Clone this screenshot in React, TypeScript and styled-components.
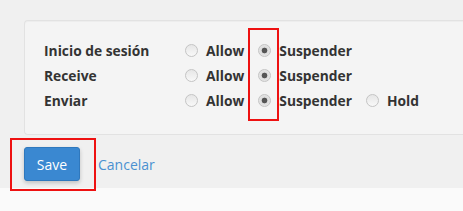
import React from 'react';
import styled, { createGlobalStyle } from 'styled-components';

const GlobalStyle = createGlobalStyle`
  body {
    margin: 0;
    background: #fafafa;
    font-family: 'Open Sans', 'Liberation Sans', sans-serif;
  }
`;

const Page = styled.div`
  position: relative;
  width: 463px;
  height: 211px;
  overflow: hidden;
  background: #fafafa;
`;

const Gray = styled.div`
  background: #f0f0f0;
  padding: 20px 0 8px 24px;
  height: 160px;
`;

const Panel = styled.div`
  background: #f4f4f4;
  border: 1px solid #e2e2e2;
  border-right: none;
  border-radius: 4px 0 0 4px;
  padding: 17px 0 21px 19px;
  box-shadow: inset 0 1px 1px rgba(0, 0, 0, 0.03);
`;

const Row = styled.div`
  display: grid;
  grid-template-columns: 141px auto;
  align-items: center;
  height: 25px;
`;

const Label = styled.div`
  font-size: 13.8px;
  font-weight: 700;
  color: #333;
`;

const Options = styled.div`
  display: flex;
  align-items: center;
  gap: 14px;
`;

const Option = styled.label`
  display: flex;
  align-items: center;
  gap: 8px;
  font-size: 13.8px;
  font-weight: 700;
  color: #333;
`;

const Radio = styled.span<{ $checked?: boolean }>`
  box-sizing: border-box;
  width: 13px;
  height: 13px;
  border-radius: 50%;
  border: 1px solid #c4c4c4;
  background: ${(p) =>
    p.$checked
      ? 'radial-gradient(circle, #555 0 2.5px, #dcdcdc 3.2px, #eee 100%)'
      : 'linear-gradient(#e6e6e6, #f8f8f8)'};
`;

const Actions = styled.div`
  display: flex;
  align-items: center;
  gap: 18px;
  margin-top: 12px;
`;

const SaveButton = styled.button`
  width: 56px;
  height: 34px;
  border: 1px solid #2f78bd;
  border-radius: 3px;
  background: #3a88d1;
  color: #fff;
  font-family: 'Open Sans', 'Liberation Sans', sans-serif;
  font-size: 14px;
  box-shadow: 0 2px 4px rgba(0, 0, 0, 0.2);
  padding: 0;
`;

const CancelLink = styled.a`
  color: #4a90d0;
  font-size: 14px;
  text-decoration: none;
`;

const Highlight = styled.div<{ $x: number; $y: number; $w: number; $h: number }>`
  position: absolute;
  left: ${(p) => p.$x}px;
  top: ${(p) => p.$y}px;
  width: ${(p) => p.$w}px;
  height: ${(p) => p.$h}px;
  box-sizing: border-box;
  border: 2px solid #ee1111;
  pointer-events: none;
`;

const rows = [
  { label: 'Inicio de sesión', hold: false },
  { label: 'Receive', hold: false },
  { label: 'Enviar', hold: true },
];

export default function App() {
  return (
    <>
      <GlobalStyle />
      <Page>
        <Gray>
          <Panel>
            {rows.map((r) => (
              <Row key={r.label}>
                <Label>{r.label}</Label>
                <Options>
                  <Option>
                    <Radio />
                    Allow
                  </Option>
                  <Option>
                    <Radio $checked />
                    Suspender
                  </Option>
                  {r.hold && (
                    <Option>
                      <Radio />
                      Hold
                    </Option>
                  )}
                </Options>
              </Row>
            ))}
          </Panel>
          <Actions>
            <SaveButton>Save</SaveButton>
            <CancelLink href="#">Cancelar</CancelLink>
          </Actions>
        </Gray>
        <Highlight $x={248} $y={28} $w={31} $h={93} />
        <Highlight $x={10} $y={138} $w={86} $h={53} />
      </Page>
    </>
  );
}
